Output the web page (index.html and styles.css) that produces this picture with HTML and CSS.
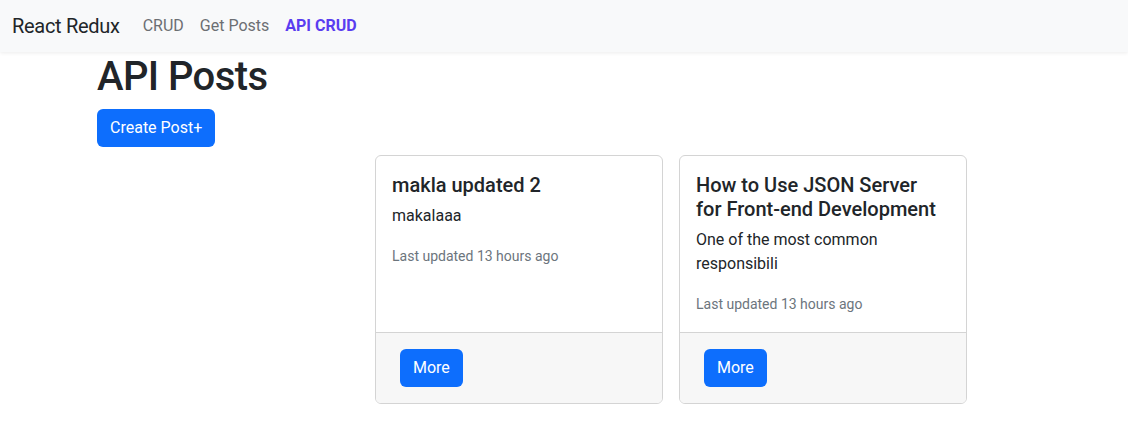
FILE: index.html
```html
<!DOCTYPE html>
<html lang="en">
<head>
<meta charset="utf-8">
<title>React Redux</title>
<link rel="stylesheet" href="styles.css">
</head>
<body>
<nav class="navbar">
  <a class="brand" href="#">React Redux</a>
  <ul class="nav">
    <li><a class="nav-link" href="#">CRUD</a></li>
    <li><a class="nav-link" href="#">Get Posts</a></li>
    <li><a class="nav-link active" href="#">API CRUD</a></li>
  </ul>
</nav>
<main class="container">
  <h1 class="title">API Posts</h1>
  <button class="btn">Create Post+</button>
  <div class="cards">
    <div class="card">
      <div class="card-body">
        <h5 class="card-title">makla updated 2</h5>
        <p class="card-text">makalaaa</p>
        <p class="card-text last"><small class="muted">Last updated 13 hours ago</small></p>
      </div>
      <div class="card-footer"><button class="btn">More</button></div>
    </div>
    <div class="card">
      <div class="card-body">
        <h5 class="card-title">How to Use JSON Server for Front-end Development</h5>
        <p class="card-text">One of the most common responsibili</p>
        <p class="card-text last"><small class="muted">Last updated 13 hours ago</small></p>
      </div>
      <div class="card-footer"><button class="btn">More</button></div>
    </div>
  </div>
</main>
</body>
</html>
```

FILE: styles.css
```css
* { box-sizing: border-box; }
html, body { margin: 0; padding: 0; }
body {
  font-family: Roboto, "Noto Sans", sans-serif;
  font-size: 16px;
  line-height: 1.5;
  color: #212529;
  background: #fff;
}
.navbar {
  display: flex;
  align-items: center;
  height: 52px;
  padding: 0 12px;
  background: #f8f9fa;
  box-shadow: 0 1px 4px rgba(0,0,0,0.08);
}
.brand {
  font-size: 20px;
  letter-spacing: -0.3px;
  color: #212529;
  text-decoration: none;
  margin-right: 15px;
  line-height: 30px;
}
.nav {
  display: flex;
  list-style: none;
  margin: 0;
  padding: 0;
}
.nav-link {
  display: block;
  padding: 8px;
  color: #6c6f73;
  text-decoration: none;
}
.nav-link.active {
  color: #5a3df0;
  font-weight: 700;
}
.container {
  padding: 0 97px;
}
.title {
  font-size: 40px;
  font-weight: 500;
  letter-spacing: -0.6px;
  line-height: 1.2;
  margin: 1px 0 8px;
}
.btn {
  font-family: inherit;
  font-size: 16px;
  line-height: 24px;
  padding: 7px 13px;
  color: #fff;
  background: #0d6efd;
  border: 0;
  border-radius: 6px;
}
.cards {
  display: flex;
  gap: 16px;
  margin: 8px 0 0 278px;
}
.card {
  width: 288px;
  display: flex;
  flex-direction: column;
  border: 1px solid #d4d4d4;
  border-radius: 6px;
  overflow: hidden;
}
.card-body {
  flex: 1;
  padding: 16px;
}
.card-title {
  font-size: 20px;
  font-weight: 500;
  line-height: 1.2;
  margin: 1px 0 7px;
  text-wrap: balance;
}
.card-text {
  margin: 0 0 16px;
}
.card-text.last { margin-bottom: 0; }
.muted {
  font-size: 14px;
  color: #6c757d;
}
.card-footer {
  background: #f7f7f7;
  border-top: 1px solid #d4d4d4;
  padding: 16px 24px;
}
```
